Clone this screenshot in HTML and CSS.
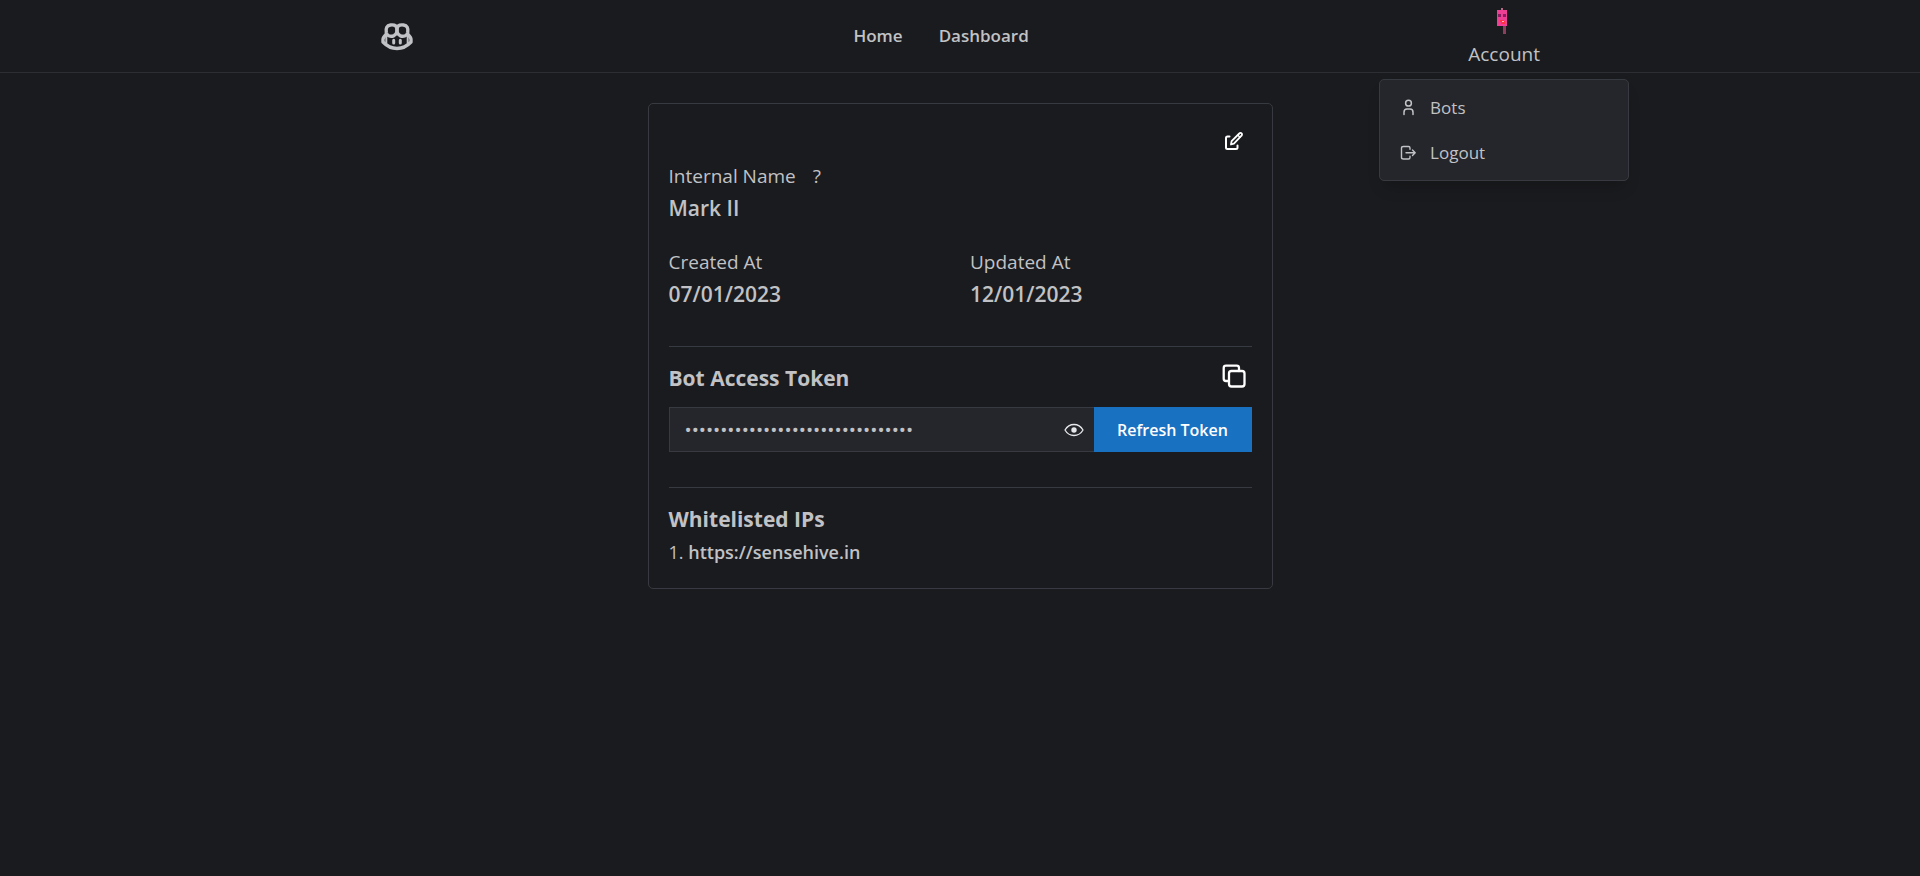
FILE: index.html
```html
<!DOCTYPE html>
<html lang="en">
<head>
<meta charset="utf-8">
<title>Bot details</title>
<link rel="stylesheet" href="styles.css">
</head>
<body>
<header class="header">
  <div class="header-inner">
    <a class="logo" href="#" aria-label="Home page">
      <svg width="34" height="34" viewBox="0 0 34 34" fill="none" stroke="currentColor" stroke-width="3.4" stroke-linejoin="round" stroke-linecap="round">
        <path d="M17 9.500C16.500 6.200 13.500 5.600 10.500 6C6.800 6.500 5.600 9 6.300 13.500C7 17.300 11 18 14 16.600C16.500 15.300 17.300 12.500 17 9.500Z"/>
        <path d="M17 9.500C17.500 6.200 20.500 5.600 23.500 6C27.200 6.500 28.400 9 27.700 13.500C27 17.300 23 18 20 16.600C17.500 15.300 16.700 12.500 17 9.500Z"/>
        <path d="M6 15.500C4.500 17 3 18.500 3 20.500V23C7 27.200 12 29.500 17 29.500S27 27.200 31 23V20.500C31 18.500 29.500 17 28 15.500"/>
        <path d="M6.300 16V24M27.700 16V24" stroke-width="2"/>
        <path d="M13.700 21.300V24M20.300 21.300V24" stroke-width="3"/>
      </svg>
    </a>
    <nav class="nav">
      <a href="#">Home</a>
      <a href="#">Dashboard</a>
    </nav>
    <div class="account">
      <button class="account-button" type="button" aria-haspopup="menu" aria-expanded="true">
        <svg width="16" height="28" viewBox="0 0 16 28" aria-hidden="true">
          <rect x="5" y="0" width="2" height="3" fill="#b96a87"/>
          <rect x="7" y="18" width="3" height="8" fill="#8c3f5c"/>
          <rect x="1" y="2" width="10" height="16" fill="#ef3f94"/>
          <rect x="2" y="6" width="3" height="3" fill="#8a1d62"/>
          <rect x="7" y="6" width="3" height="3" fill="#8a1d62"/>
          <path d="M4 12h4v1h1v3H5v-2H4z" fill="#ff3040"/>
          <rect x="6" y="13" width="2" height="1" fill="#ffb3c4"/>
        </svg>
        <span>Account</span>
      </button>
      <div class="menu" role="menu">
        <button class="menu-item" type="button" role="menuitem">
          <svg width="18" height="18" viewBox="0 0 18 18" fill="none" stroke="currentColor" stroke-width="1.500" stroke-linecap="round">
            <circle cx="9.500" cy="4.200" r="2.900"/>
            <path d="M5 15.500v-2.300c0-2 1.200-3.200 3-3.200h3c1.800 0 3 1.200 3 3.200v2.300"/>
          </svg>
          Bots
        </button>
        <button class="menu-item" type="button" role="menuitem">
          <svg width="18" height="18" viewBox="0 0 18 18" fill="none" stroke="currentColor" stroke-width="1.400" stroke-linecap="round" stroke-linejoin="round">
            <path d="M11 5.200V4c0-1-.6-1.500-1.500-1.500h-5C3.500 2.500 2.500 3 2.500 4v9.500c0 1 1 1.500 2 1.500h5c.9 0 1.500-.5 1.500-1.500v-1.300"/>
            <path d="M7 8.700h9M13.500 6l2.700 2.700-2.700 2.700"/>
          </svg>
          Logout
        </button>
      </div>
    </div>
  </div>
</header>
<main class="page">
  <article class="card">
    <div class="toolbar">
      <button class="icon-button" type="button" aria-label="Edit bot">
        <svg width="20" height="20" viewBox="0 0 20 20" fill="none" stroke="currentColor" stroke-width="2" stroke-linecap="round" stroke-linejoin="round">
          <path d="M5.500 5.500H3.500c-1 0-1.500.6-1.500 1.500v9.500c0 1 .6 1.500 1.500 1.500H12c1 0 1.500-.6 1.500-1.500v-2"/>
          <path d="M7 13.500l.6-3.300 7.700-7.700c.7-.7 1.700-.7 2.300-.1s.6 1.700-.1 2.300L9.900 12.700z" stroke-width="1.800"/>
          <path d="M14 4.300l1.900 1.900" stroke-width="1.400"/>
        </svg>
      </button>
    </div>
    <dl class="details">
      <div class="field field-wide">
        <dt>Internal Name <span class="hint">?</span></dt>
        <dd>Mark II</dd>
      </div>
      <div class="field">
        <dt>Created At</dt>
        <dd>07/01/2023</dd>
      </div>
      <div class="field">
        <dt>Updated At</dt>
        <dd>12/01/2023</dd>
      </div>
    </dl>
    <section class="section">
      <div class="section-head">
        <h2><label for="token">Bot Access Token</label></h2>
        <button class="icon-button" type="button" aria-label="Copy token">
          <svg width="24" height="24" viewBox="0 0 24 24" fill="none" stroke="currentColor" stroke-width="2.300" stroke-linejoin="round" stroke-linecap="round">
            <rect x="7" y="7" width="15.500" height="15.500" rx="2.500"/>
            <path d="M7 17H4c-1.500 0-2.300-.8-2.300-2.300V4c0-1.500.8-2.300 2.300-2.300h10.700C16.200 1.700 17 2.500 17 4v3"/>
          </svg>
        </button>
      </div>
      <div class="token-row">
        <div class="token-field">
          <input id="token" type="password" value="a1b2c3d4e5f6a7b8c9d0e1f2a3b4c5d6" readonly>
          <button class="reveal" type="button" aria-label="Show token">
            <svg width="20" height="14" viewBox="0 0 20 14" fill="none" stroke="currentColor" stroke-width="1.300">
              <path d="M1 7C3 3.500 6 1.500 10 1.500S17 3.500 19 7c-2 3.500-5 5.500-9 5.500S3 10.500 1 7z" stroke-linejoin="round"/>
              <circle cx="10" cy="7" r="2.700" fill="currentColor" stroke="none"/>
            </svg>
          </button>
        </div>
        <button class="refresh" type="button">Refresh Token</button>
      </div>
    </section>
    <section class="section section-last">
      <h2>Whitelisted IPs</h2>
      <p class="ip">1. <strong>https://sensehive.in</strong></p>
    </section>
  </article>
</main>
</body>
</html>
```

FILE: styles.css
```css
* {
  box-sizing: border-box;
}

body {
  margin: 0;
  min-height: 100vh;
  background: #1a1b1e;
  color: #c1c2c5;
  font-family: "Open Sans", "Noto Sans", sans-serif;
  font-size: 19px;
  line-height: 28px;
}

button,
input {
  margin: 0;
  font: inherit;
  color: inherit;
}

button {
  padding: 0;
  border: 0;
  background: none;
  cursor: pointer;
}

svg {
  display: block;
  flex: none;
}

.header {
  border-bottom: 1px solid #2c2e33;
}

.header-inner {
  display: flex;
  align-items: center;
  justify-content: space-between;
  max-width: 1160px;
  height: 72px;
  margin: 0 auto;
}

.logo {
  color: #c1c2c5;
}

.nav {
  display: flex;
  gap: 36px;
}

.nav a {
  color: inherit;
  font-size: 17px;
  font-weight: 600;
  text-decoration: none;
}

.account {
  position: relative;
}

.account-button {
  display: flex;
  flex-direction: column;
  align-items: center;
  gap: 4px;
  padding-top: 4px;
}

.menu {
  position: absolute;
  top: 100%;
  left: 50%;
  width: 250px;
  margin-top: 11px;
  padding: 5px;
  transform: translateX(-50%);
  border: 1px solid #373a40;
  border-radius: 5px;
  background: #25262b;
  box-shadow: 0 10px 15px -5px rgba(0, 0, 0, 0.2);
}

.menu-item {
  display: flex;
  align-items: center;
  gap: 13px;
  width: 100%;
  height: 45px;
  padding: 0 14px;
  font-size: 17px;
}

.page {
  display: flex;
  justify-content: center;
  padding: 30px 16px;
}

.card {
  width: 100%;
  max-width: 625px;
  padding: 19px 20px;
  border: 1px solid #373a40;
  border-radius: 5px;
}

.toolbar {
  display: flex;
  justify-content: flex-end;
  margin-bottom: 1px;
}

.icon-button {
  display: grid;
  place-items: center;
  width: 36px;
  height: 36px;
  color: #ffffff;
}

.details {
  display: grid;
  grid-template-columns: 1fr 1fr;
  gap: 22px 20px;
  margin: 0 0 36px;
}

.field-wide {
  grid-column: 1 / -1;
}

.field dt {
  line-height: 32px;
}

.hint {
  margin-left: 12px;
}

.field dd {
  margin: 0;
  font-size: 21px;
  font-weight: 600;
  line-height: 32px;
}

.section {
  padding: 11px 0 35px;
  border-top: 1px solid #373a40;
}

.section-last {
  padding: 15px 0 0;
}

.section-head {
  display: flex;
  align-items: flex-end;
  justify-content: space-between;
  margin-bottom: 13px;
}

h2 {
  margin: 0;
  font-size: 21px;
  font-weight: 700;
  line-height: 32px;
}

.token-row {
  display: flex;
}

.token-field {
  display: flex;
  flex: 1;
  align-items: center;
  height: 45px;
  border: 1px solid #373a40;
  border-right: 0;
  background: #25262b;
}

.token-field input {
  flex: 1;
  min-width: 0;
  height: 100%;
  padding: 0 15px;
  border: 0;
  outline: 0;
  background: none;
  font-size: 19px;
}

.reveal {
  padding: 8px 10px;
  color: #e6e7ea;
}

.refresh {
  width: 158px;
  background: #1971c2;
  color: #ffffff;
  font-size: 16px;
  font-weight: 600;
}

.ip {
  margin: 0;
  font-size: 18px;
  line-height: 34px;
}

.ip strong {
  font-weight: 600;
}
```
